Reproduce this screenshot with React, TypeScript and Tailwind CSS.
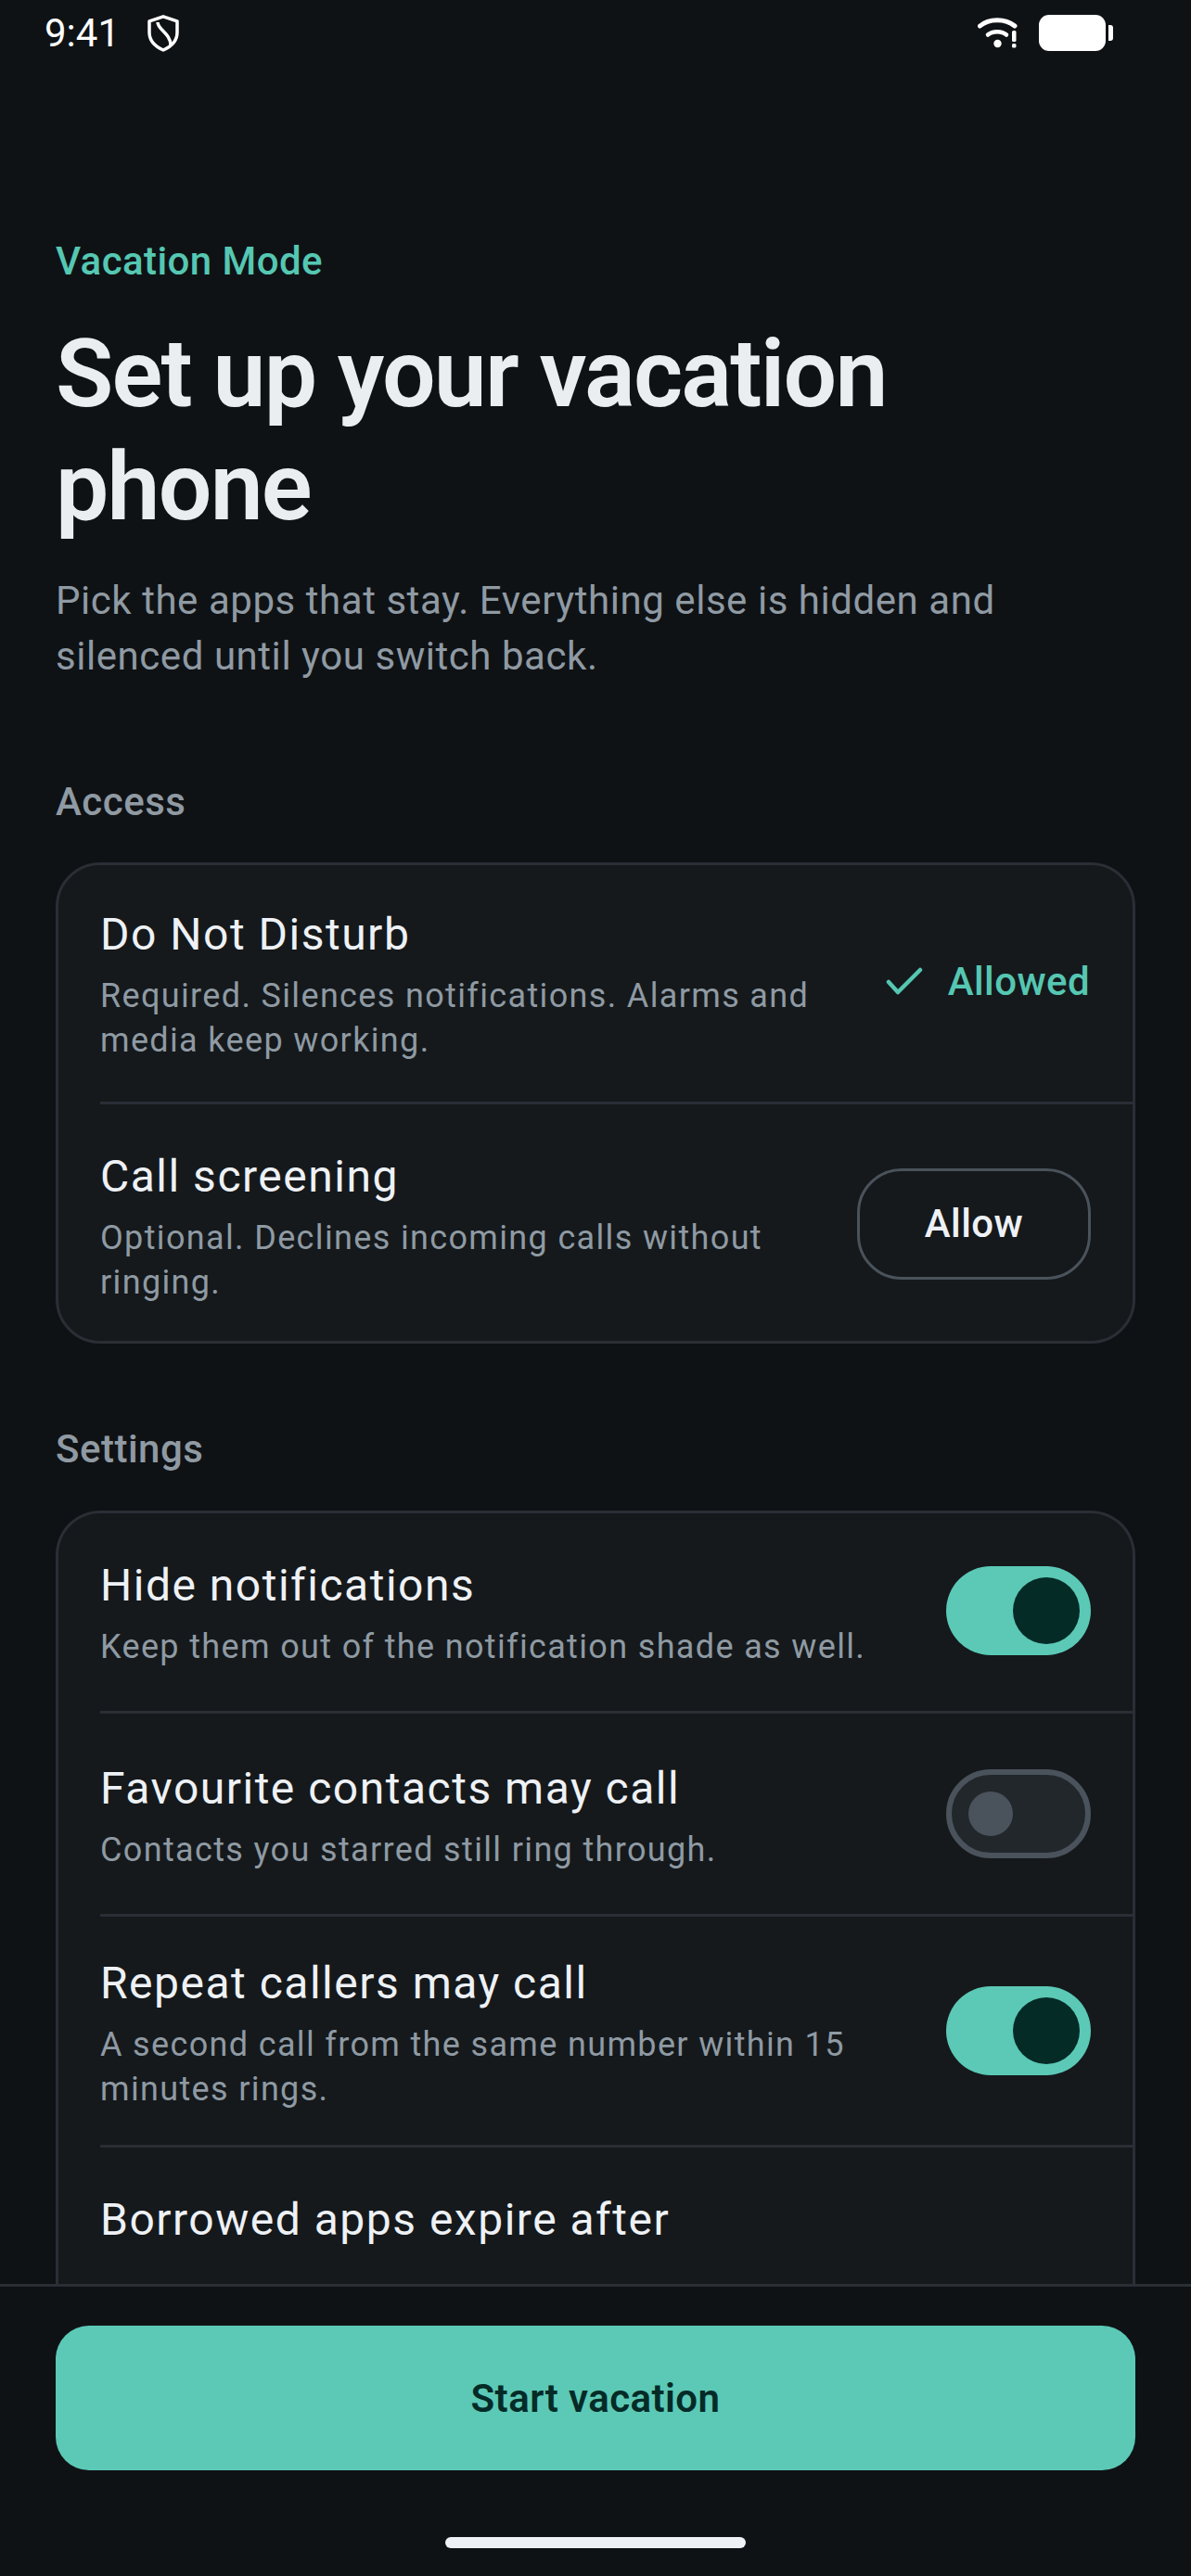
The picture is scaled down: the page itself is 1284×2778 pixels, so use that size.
import React from "react";

const Toggle = ({ on }: { on: boolean }) =>
  on ? (
    <div className="flex h-[96px] w-[156px] shrink-0 items-center justify-end rounded-full bg-[#5bc9b6] pr-[12px]">
      <div className="h-[72px] w-[72px] rounded-full bg-[#052b27]" />
    </div>
  ) : (
    <div className="flex h-[96px] w-[156px] shrink-0 items-center rounded-full border-[6px] border-[#4a525b] bg-[#22272c] pl-[18px]">
      <div className="h-[48px] w-[48px] rounded-full bg-[#4a525b]" />
    </div>
  );

const Row = ({
  title,
  desc,
  right,
  divider,
  pad,
}: {
  title: string;
  desc?: string;
  right?: React.ReactNode;
  divider?: boolean;
  pad: string;
}) => (
  <div className={divider ? "ml-[45px] border-t-[3px] border-[#2a2e35]" : "ml-[45px]"}>
    <div className={`flex items-center gap-[54px] pr-[45px] ${pad}`}>
      <div className="min-w-0 flex-1">
        <div className="text-[48px] leading-[72px] tracking-[1.5px] text-[#eef1f5]">{title}</div>
        {desc && <div className="mt-[6px] text-[36px] leading-[48px] tracking-[1.35px] text-[#8f9aa3]">{desc}</div>}
      </div>
      {right}
    </div>
  </div>
);

const SectionLabel = ({ children }: { children: React.ReactNode }) => (
  <div className="text-[42px] leading-[60px] font-medium tracking-[0.5px] text-[#8f9aa3]">{children}</div>
);

export default function App() {
  return (
    <div className="flex h-[2778px] w-[1284px] flex-col overflow-hidden bg-[#0f1215] font-['Roboto',sans-serif]">
      <div className="min-h-0 flex-1 overflow-hidden">
        {/* status bar */}
        <div className="flex h-[72px] items-center justify-between pr-[84px] pl-[48px]">
          <div className="flex items-center gap-[30px]">
            <span className="text-[42px] leading-[70px] text-white">9:41</span>
            <svg width="34" height="40" viewBox="0 0 34 40" fill="none" stroke="white" strokeWidth="3.5">
              <path d="M17 1.8 L32 6.8 V19 C32 28 26 34 17 38 C8 34 2 28 2 19 V6.8 Z" strokeLinejoin="round" />
              <path d="M11 8 C11 16 25 20 25 33" />
            </svg>
          </div>
          <div className="flex items-center gap-[22px]">
            <svg width="44" height="34" viewBox="0 0 44 34" fill="white">
              <path d="M2.5 9 C12 0.5 30 0.5 40 9" fill="none" stroke="white" strokeWidth="5" strokeLinecap="round" />
              <path d="M11 18.5 C16 14 26 14 31 18.5" fill="none" stroke="white" strokeWidth="4.5" strokeLinecap="round" />
              <circle cx="21.5" cy="28" r="4.2" />
              <rect x="37" y="14" width="4.5" height="12" rx="1.5" />
              <rect x="37" y="28" width="4.5" height="4.5" rx="1.5" />
            </svg>
            <svg width="80" height="40" viewBox="0 0 80 40" fill="white">
              <rect x="0" y="0" width="72" height="39" rx="11" />
              <path d="M75 11 H77 A3 3 0 0 1 80 14 V25 A3 3 0 0 1 77 28 H75 Z" />
            </svg>
          </div>
        </div>

        <div className="px-[60px] pt-[180px]">
          <div className="text-[42px] leading-[60px] font-medium tracking-[0.42px] text-[#55c7b2]">Vacation Mode</div>
          <h1 className="mt-[30px] text-[102px] leading-[122.4px] font-semibold tracking-[-1.8px] text-[#eaeef1]">
            Set up your vacation phone
          </h1>
          <p className="mt-[31px] text-[42px] leading-[60px] tracking-[0.55px] text-[#8f9aa3]">
            Pick the apps that stay. Everything else is hidden and silenced until you switch back.
          </p>

          <div className="mt-[97px]">
            <SectionLabel>Access</SectionLabel>
          </div>
          <div className="mt-[35px] rounded-[48px] border-[3px] border-[#2a2e35] bg-[#15191c]">
            <Row
              pad="pt-[39px] pb-[42px]"
              title="Do Not Disturb"
              desc="Required. Silences notifications. Alarms and media keep working."
              right={
                <div className="flex shrink-0 items-center gap-[27px] pr-[1px]">
                  <svg width="40" height="32" viewBox="0 0 40 32" fill="none" stroke="#55c7b2" strokeWidth="4.5" strokeLinecap="round" strokeLinejoin="round">
                    <path d="M3 16 L13 27 L37 3" />
                  </svg>
                  <span className="text-[42px] leading-[60px] font-medium tracking-[0.42px] text-[#55c7b2]">Allowed</span>
                </div>
              }
            />
            <Row
              divider
              pad="pt-[42px] pb-[39px]"
              title="Call screening"
              desc="Optional. Declines incoming calls without ringing."
              right={
                <div className="flex h-[120px] w-[252px] shrink-0 items-center justify-center rounded-[48px] border-[3px] border-[#4a525b] text-[42px] font-medium tracking-[0.42px] text-[#eef1f5]">
                  Allow
                </div>
              }
            />
          </div>

          <div className="mt-[84px]">
            <SectionLabel>Settings</SectionLabel>
          </div>
          <div className="mt-[36px] rounded-t-[48px] border-[3px] border-b-0 border-[#2a2e35] bg-[#15191c]">
            <Row pad="pt-[42px] pb-[45px]" title="Hide notifications" desc="Keep them out of the notification shade as well." right={<Toggle on />} />
            <Row pad="py-[45px]" divider title="Favourite contacts may call" desc="Contacts you starred still ring through." right={<Toggle on={false} />} />
            <Row pad="py-[36px]" divider title="Repeat callers may call" desc="A second call from the same number within 15 minutes rings." right={<Toggle on />} />
            <Row pad="pt-[42px] pb-[120px]" divider title="Borrowed apps expire after" />
          </div>
        </div>
      </div>

      {/* bottom action */}
      <div className="h-[315px] shrink-0 border-t-[3px] border-[#2a2e35] bg-[#0f1215] px-[60px] pt-[42px]">
        <div className="flex h-[156px] items-center justify-center rounded-[36px] bg-[#5bc9b6] text-[42px] font-semibold tracking-[0.42px] text-[#052b27]">
          Start vacation
        </div>
        <div className="mx-auto mt-[72px] h-[12px] w-[324px] rounded-full bg-[#eef1f5]" />
      </div>
    </div>
  );
}
